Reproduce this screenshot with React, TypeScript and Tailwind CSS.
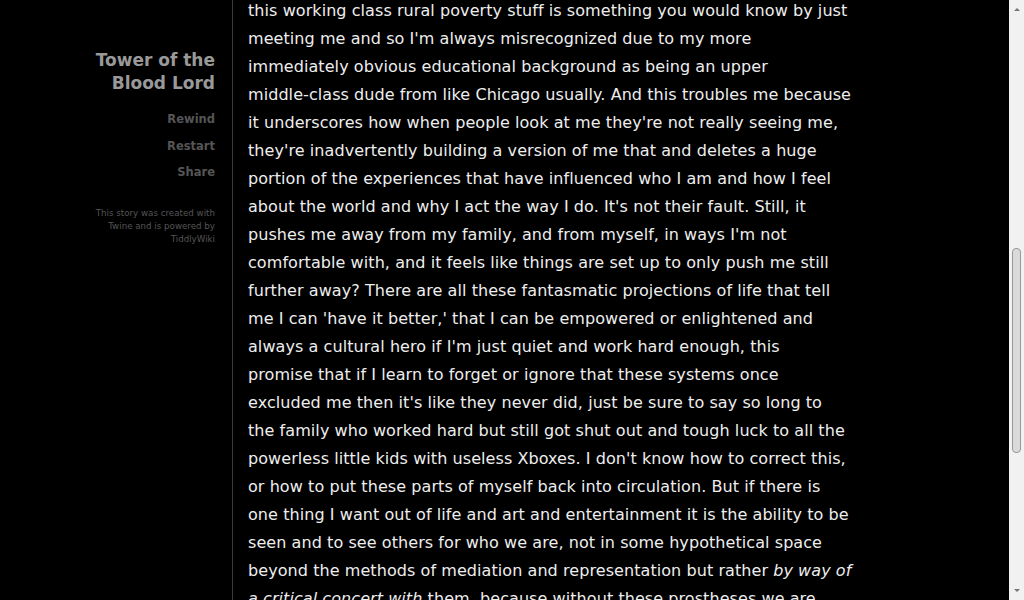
import { ReactNode } from 'react'

// Twine / TiddlyWiki story page, scrolled partway down a long passage.

function SidebarLink({ children }: { children: ReactNode }) {
  return (
    <a href="#" className="block text-[11.5px] font-bold leading-[26.5px] text-[#555]">
      {children}
    </a>
  )
}

function Sidebar() {
  return (
    <aside className="w-[233px] shrink-0 border-r border-[#3a3a3a] pr-[17px] pt-[49px] text-right">
      <h1 className="text-[17px] font-bold leading-[23px] text-[#999]">
        Tower of the
        <br />
        Blood Lord
      </h1>
      <nav className="mt-[11px]">
        <SidebarLink>Rewind</SidebarLink>
        <SidebarLink>Restart</SidebarLink>
        <SidebarLink>Share</SidebarLink>
      </nav>
      <p className="ml-auto mt-[21px] w-[125px] text-[8.7px] leading-[13px] text-[#555]">
        This story was created with Twine and is powered by TiddlyWiki
      </p>
    </aside>
  )
}

// Fake browser scrollbar on the right edge
function Scrollbar() {
  return (
    <div className="flex w-[15px] shrink-0 flex-col items-center bg-[#f1f1f1]">
      <div className="mt-[8px] h-0 w-0 border-x-[3px] border-b-[3px] border-x-transparent border-b-[#777]" />
      <div className="mt-[237px] h-[205px] w-[9px] rounded-[4px] border border-[#999] bg-[#dadada]" />
      <div className="mt-auto mb-[8px] h-0 w-0 border-x-[3px] border-t-[3px] border-x-transparent border-t-[#777]" />
    </div>
  )
}

// passage text, broken where the original page wraps it
const lines: ReactNode[] = [
  'this working class rural poverty stuff is something you would know by just',
  "meeting me and so I'm always misrecognized due to my more",
  'immediately obvious educational background as being an upper',
  'middle-class dude from like Chicago usually. And this troubles me because',
  "it underscores how when people look at me they're not really seeing me,",
  "they're inadvertently building a version of me that and deletes a huge",
  'portion of the experiences that have influenced who I am and how I feel',
  "about the world and why I act the way I do. It's not their fault. Still, it",
  "pushes me away from my family, and from myself, in ways I'm not",
  'comfortable with, and it feels like things are set up to only push me still',
  'further away? There are all these fantasmatic projections of life that tell',
  "me I can 'have it better,' that I can be empowered or enlightened and",
  "always a cultural hero if I'm just quiet and work hard enough, this",
  'promise that if I learn to forget or ignore that these systems once',
  "excluded me then it's like they never did, just be sure to say so long to",
  'the family who worked hard but still got shut out and tough luck to all the',
  "powerless little kids with useless Xboxes. I don't know how to correct this,",
  'or how to put these parts of myself back into circulation. But if there is',
  'one thing I want out of life and art and entertainment it is the ability to be',
  'seen and to see others for who we are, not in some hypothetical space',
  <>
    beyond the methods of mediation and representation but rather <em>by way of</em>
  </>,
  <>
    <em>a critical concert with</em> them, because without these prostheses we are
  </>,
  'left with nothing but the silence of our own heads.',
]

export default function App() {
  return (
    <div
      className="flex h-[600px] overflow-hidden bg-black"
      style={{ fontFamily: '"DejaVu Sans", Verdana, sans-serif' }}
    >
      <Sidebar />
      <main className="flex-1 overflow-hidden pl-[15px]">
        <p className="-mt-[3px] text-[16px] leading-[28px] tracking-[0.07px] text-[#eee]">
          {lines.map((line, i) => (
            <span key={i} className="block whitespace-nowrap">
              {line}
            </span>
          ))}
        </p>
      </main>
      <Scrollbar />
    </div>
  )
}
